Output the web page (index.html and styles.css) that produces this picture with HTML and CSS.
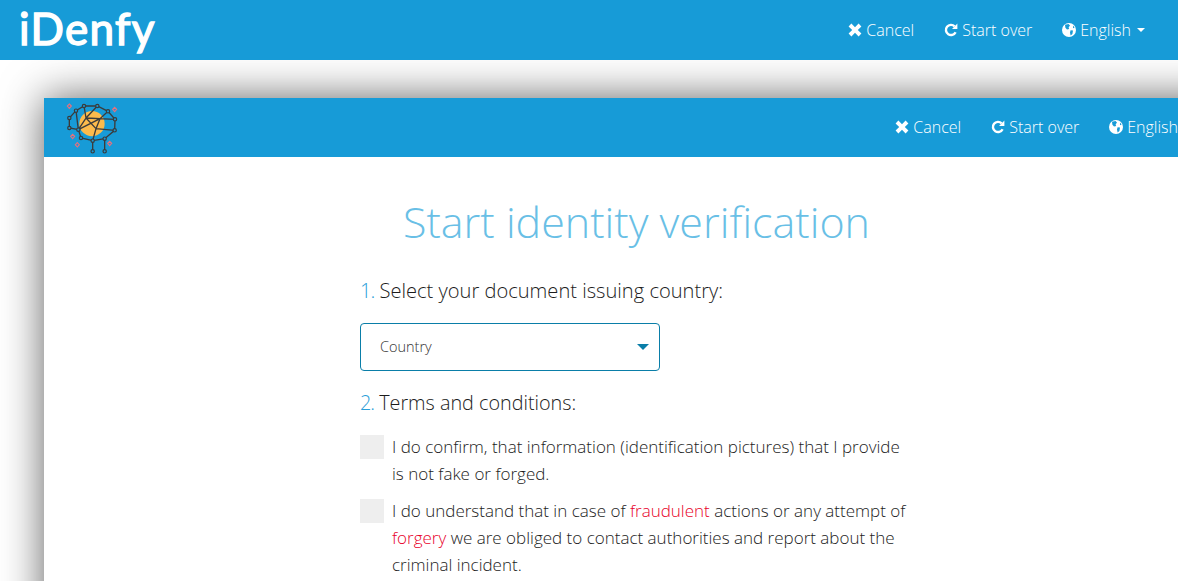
FILE: index.html
```html
<!DOCTYPE html>
<html lang="en">
<head>
<meta charset="utf-8">
<title>iDenfy</title>
<link rel="stylesheet" href="styles.css">
</head>
<body>
<header class="bar bar-top">
  <div class="brand">iDenfy</div>
  <nav class="nav">
    <a class="nav-item"><svg class="ico" viewBox="0 0 14 14"><path d="M0.6 3.4 3.4 0.6 7 4.2 10.6 0.6 13.4 3.4 9.8 7 13.4 10.6 10.6 13.4 7 9.8 3.4 13.4 0.6 10.6 4.2 7Z"/></svg>Cancel</a>
    <a class="nav-item"><svg class="ico" viewBox="0 0 14 14"><path class="arc" d="M11.6 9.2A5.1 5.1 0 1 1 10.6 3.3"/><path d="M13.4 0.6V6H8Z"/></svg>Start over</a>
    <a class="nav-item"><svg class="ico" viewBox="0 0 14 14"><circle cx="7" cy="7" r="7"/><path class="land" d="M3 1.8 6.5 1 8 2.6 6.6 4.4 7.2 6 5 6.4 3.4 4.8ZM8.6 7.2 11 7.6 10.4 11 8.6 12.4 8 9.6ZM11 2.6 12.6 4.6 11 5.2Z"/></svg>English<span class="caret"></span></a>
  </nav>
</header>
<div class="stage">
  <section class="window">
    <header class="bar bar-inner">
      <svg class="emblem" viewBox="180 291 195 174">
        <circle class="sun" cx="276" cy="365" r="38"/>
        <g class="links">
          <path d="M252 312H292L324 328 345 352 344 385 314 410 278 416 243 408 235 383 208 378V348L228 326Z"/>
          <path d="M278 416V448M314 410V448M228 326 235 383 258 348 252 312M258 348 345 352M292 312 258 348M235 383 300 350 324 328M288 380 344 385M258 348 288 380 278 416M300 350 288 380"/>
        </g>
        <g class="nodes">
          <circle cx="252" cy="312" r="5"/><circle cx="292" cy="312" r="5"/><circle cx="228" cy="326" r="5"/><circle cx="324" cy="328" r="5"/><circle cx="345" cy="352" r="5"/><circle cx="208" cy="348" r="5"/><circle cx="208" cy="378" r="5"/><circle cx="235" cy="383" r="5"/><circle cx="344" cy="385" r="5"/><circle cx="243" cy="408" r="5"/><circle cx="278" cy="416" r="5"/><circle cx="314" cy="410" r="5"/><circle cx="278" cy="448" r="5"/><circle cx="314" cy="448" r="5"/>
        </g>
        <g class="sparks">
          <path d="M208 306 214 312 208 319 202 312Z"/><path d="M344 316 350 322 344 329 338 322Z"/><path d="M218 397 224 403 218 410 212 403Z"/><path d="M232 422 238 428 232 435 226 428Z"/><path d="M329 418 335 424 329 431 323 424Z"/>
        </g>
      </svg>
      <nav class="nav nav-inner">
        <a class="nav-item"><svg class="ico" viewBox="0 0 14 14"><path d="M0.6 3.4 3.4 0.6 7 4.2 10.6 0.6 13.4 3.4 9.8 7 13.4 10.6 10.6 13.4 7 9.8 3.4 13.4 0.6 10.6 4.2 7Z"/></svg>Cancel</a>
        <a class="nav-item"><svg class="ico" viewBox="0 0 14 14"><path class="arc" d="M11.6 9.2A5.1 5.1 0 1 1 10.6 3.3"/><path d="M13.4 0.6V6H8Z"/></svg>Start over</a>
        <a class="nav-item"><svg class="ico" viewBox="0 0 14 14"><circle cx="7" cy="7" r="7"/><path class="land" d="M3 1.8 6.5 1 8 2.6 6.6 4.4 7.2 6 5 6.4 3.4 4.8ZM8.6 7.2 11 7.6 10.4 11 8.6 12.4 8 9.6ZM11 2.6 12.6 4.6 11 5.2Z"/></svg>English<span class="caret"></span></a>
      </nav>
    </header>
    <main class="content">
      <h1 class="title">Start identity verification</h1>
      <h2 class="step"><span class="num">1.</span> Select your document issuing country:</h2>
      <div class="select"><span class="select-label">Country</span><span class="select-arrow"></span></div>
      <h2 class="step step-terms"><span class="num">2.</span> Terms and conditions:</h2>
      <div class="check-row"><span class="box"></span><p>I do confirm, that information (identification pictures) that I provide is not fake or forged.</p></div>
      <div class="check-row"><span class="box"></span><p>I do understand that in case of <em>fraudulent</em> actions or any attempt of <em>forgery</em> we are obliged to contact authorities and report about the criminal incident.</p></div>
    </main>
  </section>
</div>
</body>
</html>
```
FILE: styles.css
```css
* { box-sizing: border-box; }
html, body { height: 100%; }
body {
  margin: 0;
  background: #fff;
  font-family: "Open Sans", "Liberation Sans", sans-serif;
  font-weight: 300;
  overflow: hidden;
}
.bar {
  display: flex;
  align-items: center;
  justify-content: space-between;
  background: #179bd7;
  color: #fff;
}
.bar-top {
  position: relative;
  z-index: 2;
  height: 60px;
  padding: 0 33px 0 19px;
}
.bar-inner {
  height: 59px;
  padding: 0 33px 0 16px;
}
.brand {
  font-family: Lato, sans-serif;
  font-size: 44px;
  line-height: 56px;
  height: 60px;
  font-weight: 400;
  color: #fff;
  -webkit-text-stroke: 1.4px #fff;
  letter-spacing: 1.3px;
}
.nav { display: flex; gap: 30px; }
.nav-inner { margin-bottom: 2px; }
.nav-item {
  display: flex;
  align-items: center;
  font-size: 16px;
  line-height: 22px;
  color: #fff;
}
.ico { width: 14px; height: 14px; margin-right: 4px; fill: #fff; flex: none; }
.ico .arc { fill: none; stroke: #fff; stroke-width: 2.4; }
.ico .land { fill: #179bd7; }
.caret {
  margin-left: 6px;
  border-top: 4px solid #fff;
  border-left: 4px solid transparent;
  border-right: 4px solid transparent;
}
.stage { padding: 38px 0 0 44px; }
.window {
  width: 1181px;
  height: 600px;
  background: #fff;
  box-shadow: 0 0 40px rgba(0, 0, 0, 0.62);
}
.emblem { width: 65px; height: 58px; display: block; }
.sun { fill: #fdbb4c; }
.links { fill: none; stroke: #3b3b3b; stroke-width: 4; }
.nodes circle { fill: #179bd7; stroke: #3b3b3b; stroke-width: 3.6; }
.sparks path { fill: none; stroke: #e8707c; stroke-width: 3.4; }
.content { width: 549px; margin: 0 auto; padding-top: 35px; }
.title {
  margin: 0 0 25px;
  padding-left: 4px;
  text-align: center;
  font-size: 43px;
  line-height: 60px;
  font-weight: 300;
  color: #69bfe6;
}
.step {
  margin: 0;
  font-size: 20.1px;
  line-height: 28px;
  font-weight: 300;
  color: #1c1c1c;
}
.num { color: #2a9ed8; letter-spacing: -1px; }
.select {
  display: flex;
  align-items: center;
  justify-content: space-between;
  width: 300px;
  height: 48px;
  margin-top: 18px;
  padding: 0 10px 0 19px;
  border: 1px solid #0a7ea8;
  border-radius: 4px;
  font-size: 14.5px;
  font-weight: 300;
  color: #333;
}
.select-label { margin-bottom: 2px; }
.select-arrow {
  border-top: 6px solid #0a7ea8;
  border-left: 6px solid transparent;
  border-right: 6px solid transparent;
}
.step-terms { margin-top: 18px; font-size: 19.8px; }
.check-row { display: flex; gap: 8px; margin-top: 10px; }
.step-terms + .check-row { margin-top: 16px; }
.box { width: 24px; height: 24px; background: #eee; flex: none; margin-top: 2px; }
.check-row p {
  margin: 0;
  width: 520px;
  font-size: 17px;
  line-height: 27px;
  color: #1c1c1c;
}
.check-row em { font-style: normal; color: #e8002a; }
```
